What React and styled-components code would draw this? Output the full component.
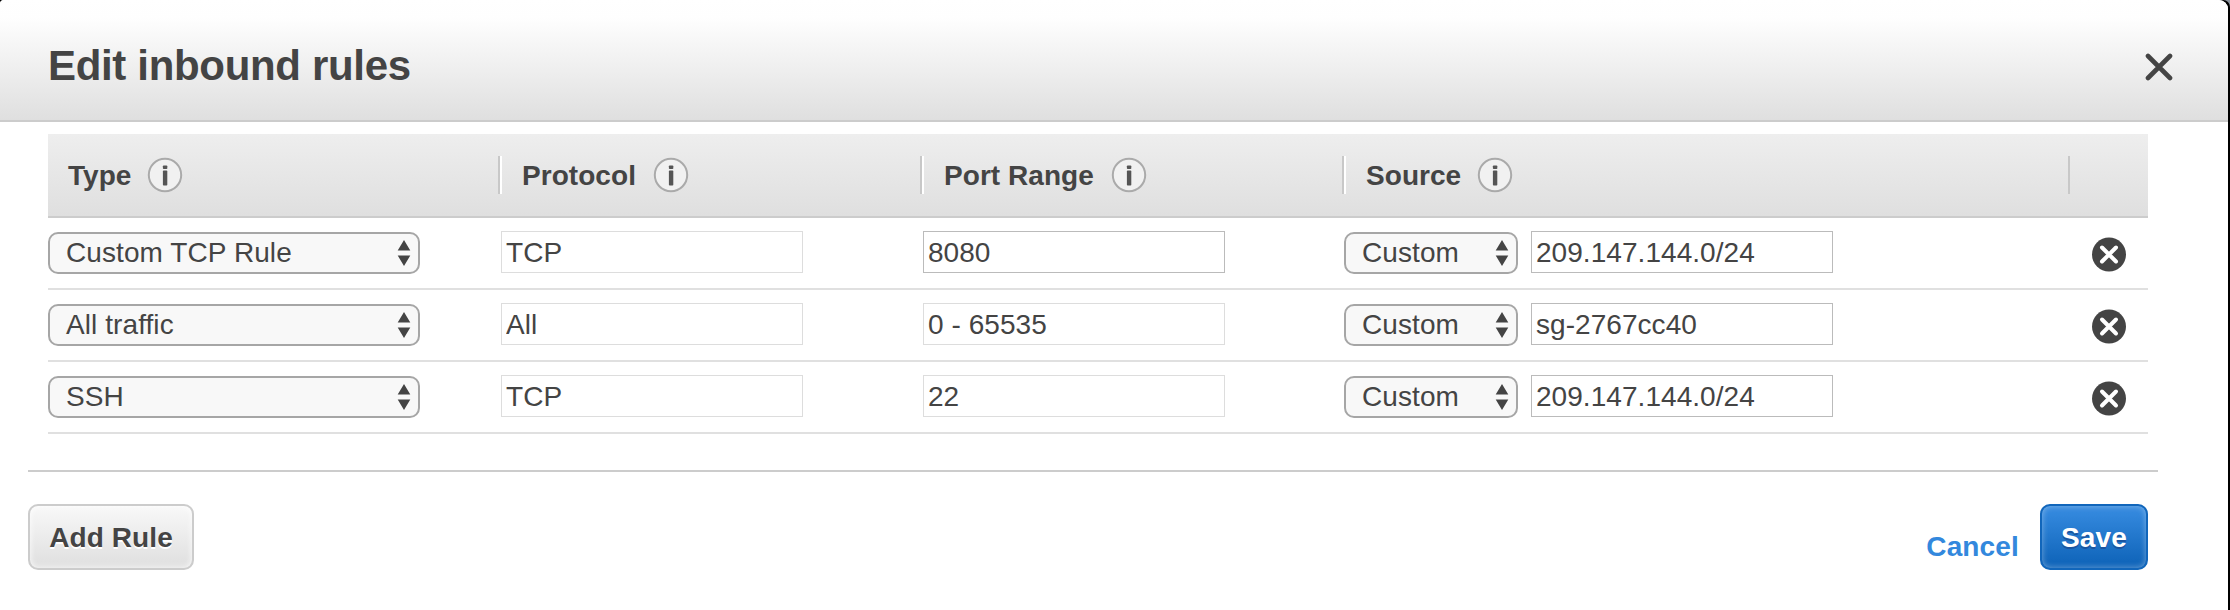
import React from 'react';
import styled, { createGlobalStyle } from 'styled-components';

const GlobalStyle = createGlobalStyle`
  *, *::before, *::after { box-sizing: border-box; }
  body {
    margin: 0;
    font-family: "Liberation Sans", Arial, Helvetica, sans-serif;
    font-size: 28px;
    color: #444;
  }
`;

const Backdrop = styled.div`
  width: 2230px;
  height: 610px;
  overflow: hidden;
  background: #8b929d;
`;

const Frame = styled.div`
  height: 610px;
  padding-right: 2px;
  border-radius: 0 7px 0 0;
  background: #000;
`;

const Dialog = styled.section`
  height: 610px;
  background: #fff;
  border-radius: 4px 9px 0 0;
  overflow: hidden;
`;

const DialogHeader = styled.header`
  display: flex;
  align-items: center;
  justify-content: space-between;
  height: 122px;
  padding: 14px 55px 0 48px;
  border-bottom: 2px solid #ccc;
  background: linear-gradient(#fff 0%, #fefefe 15%, #dfdfdf 100%);
`;

const Title = styled.h1`
  margin: 0;
  padding-bottom: 2px;
  font-size: 42px;
  line-height: 48px;
  font-weight: bold;
  letter-spacing: -0.33px;
  white-space: nowrap;
`;

const IconButton = styled.button`
  display: flex;
  padding: 0;
  border: 0;
  background: none;
  cursor: pointer;
`;

const Table = styled.div`
  margin: 12px 80px 0 48px;
`;

const Columns = styled.div`
  display: grid;
  grid-template-columns: 452px 422px 422px 726px 78px;
`;

const HeadRow = styled(Columns)`
  height: 84px;
  align-items: center;
  border-bottom: 2px solid #ccc;
  background: linear-gradient(#eee, #dfdfdf);
`;

const HeadCell = styled.div`
  display: flex;
  align-items: center;
  gap: 16px;
  height: 38px;
  padding-left: 20px;
  border-left: ${(p) => (p.$first ? 0 : 2)}px solid #fff;
  border-right: 2px solid #c8c8c8;
`;

const HeadLabel = styled.span`
  width: ${(p) => p.$width}px;
  padding-top: 2px;
  font-weight: bold;
  letter-spacing: 0.05px;
  white-space: nowrap;
`;

const EndCell = styled.div`
  height: 38px;
`;

const Row = styled(Columns)`
  height: 72px;
  border-bottom: 2px solid #e0e0e0;
`;

const Cell = styled.div`
  display: flex;
  align-items: flex-start;
  padding: 13px 0 0 ${(p) => p.$inset || 0}px;
`;

const SelectBox = styled.button`
  display: flex;
  align-items: center;
  justify-content: space-between;
  width: ${(p) => p.$width}px;
  height: 42px;
  margin: 1px ${(p) => p.$gap || 0}px 0 0;
  padding: 0 7px 0 16px;
  border: 2px solid #a6a6a6;
  border-radius: 10px;
  background: #f8f8f8;
  color: inherit;
  font: inherit;
  line-height: 36px;
  letter-spacing: 0.08px;
  white-space: nowrap;
`;

const TextField = styled.input`
  width: 302px;
  height: 42px;
  padding: 1px 4px 0;
  border: 1px solid ${(p) => (p.disabled ? '#ddd' : '#bbb')};
  border-radius: 0;
  outline: 0;
  background: #fff;
  color: #444;
  font: inherit;
  letter-spacing: 0.05px;
`;

const DeleteCell = styled.div`
  padding: 19px 0 0 22px;
`;

const Footer = styled.footer`
  display: flex;
  justify-content: space-between;
  margin: 36px 70px 0 28px;
  padding: 32px 10px 0 0;
  border-top: 2px solid #ccc;
`;

const Actions = styled.div`
  display: flex;
  align-items: flex-start;
`;

const Button = styled.button`
  width: ${(p) => p.$width}px;
  height: 66px;
  padding: 2px 0 0;
  border: 2px solid ${(p) => (p.$primary ? '#1166bb' : '#ccc')};
  border-radius: 10px;
  background: ${(p) =>
    p.$primary
      ? 'linear-gradient(#3388dd 10%, #1166bb 90%)'
      : 'linear-gradient(#f8f8f8, #dfdfdf)'};
  box-shadow: inset 0 0 6px ${(p) => (p.$primary ? 'rgba(255,255,255,.4)' : 'rgba(255,255,255,.9)')};
  color: ${(p) => (p.$primary ? '#fff' : '#444')};
  text-shadow: ${(p) => (p.$primary ? '0 2px 0 #1a55a0' : '0 2px 0 #fff')};
  font: bold 28px/32px "Liberation Sans", Arial, sans-serif;
  letter-spacing: 0.1px;
  white-space: nowrap;
`;

const CancelLink = styled.a`
  margin: 27px 21px 0 0;
  color: #3388dd;
  font-weight: bold;
  line-height: 32px;
  letter-spacing: 0.15px;
`;

const InfoIcon = () => (
  <svg width="36" height="36" viewBox="0 0 36 36">
    <circle cx="18" cy="18" r="16.2" fill="#f1f1f1" stroke="#aaa" strokeWidth="2" />
    <rect x="15.9" y="8.4" width="4.4" height="3.6" rx="0.8" fill="#555" />
    <rect x="15.9" y="13.6" width="4.4" height="15" rx="0.8" fill="#555" />
  </svg>
);

const CloseIcon = () => (
  <svg width="28" height="28" viewBox="0 0 28 28">
    <path d="M3 3L25 25M25 3L3 25" stroke="#444" strokeWidth="4.6" strokeLinecap="round" />
  </svg>
);

const DeleteIcon = () => (
  <svg width="34" height="35" viewBox="0 0 34 35">
    <circle cx="17" cy="17.5" r="17" fill="#444" />
    <path d="M10 10.5L24 24.5M24 10.5L10 24.5" stroke="#fff" strokeWidth="4" strokeLinecap="round" />
  </svg>
);

const Arrows = () => (
  <svg width="14" height="26" viewBox="0 0 14 26">
    <path d="M7 0L13.3 10.5H0.7ZM7 26L13.3 15.5H0.7Z" fill="#444" />
  </svg>
);

const Select = ({ width, gap, children }) => (
  <SelectBox type="button" $width={width} $gap={gap}>
    <span>{children}</span>
    <Arrows />
  </SelectBox>
);

const headings = [
  { name: 'Type', width: 63 },
  { name: 'Protocol', width: 115 },
  { name: 'Port Range', width: 151 },
  { name: 'Source', width: 95 },
];

const rules = [
  { type: 'Custom TCP Rule', protocol: 'TCP', port: '8080', editable: true, source: '209.147.144.0/24' },
  { type: 'All traffic', protocol: 'All', port: '0 - 65535', editable: false, source: 'sg-2767cc40' },
  { type: 'SSH', protocol: 'TCP', port: '22', editable: false, source: '209.147.144.0/24' },
];

export default function App() {
  return (
    <Backdrop>
      <GlobalStyle />
      <Frame>
        <Dialog>
          <DialogHeader>
            <Title>Edit inbound rules</Title>
            <IconButton aria-label="Close"><CloseIcon /></IconButton>
          </DialogHeader>
          <Table>
            <HeadRow>
              {headings.map(({ name, width }, i) => (
                <HeadCell key={name} $first={i === 0}>
                  <HeadLabel $width={width}>{name}</HeadLabel>
                  <InfoIcon />
                </HeadCell>
              ))}
              <EndCell />
            </HeadRow>
            {rules.map((rule) => (
              <Row key={rule.type}>
                <Cell><Select width={372}>{rule.type}</Select></Cell>
                <Cell $inset={1}><TextField defaultValue={rule.protocol} disabled /></Cell>
                <Cell $inset={1}><TextField defaultValue={rule.port} disabled={!rule.editable} /></Cell>
                <Cell>
                  <Select width={174} gap={13}>Custom</Select>
                  <TextField defaultValue={rule.source} />
                </Cell>
                <DeleteCell><IconButton aria-label="Delete"><DeleteIcon /></IconButton></DeleteCell>
              </Row>
            ))}
          </Table>
          <Footer>
            <Button $width={166}>Add Rule</Button>
            <Actions>
              <CancelLink>Cancel</CancelLink>
              <Button $primary $width={108}>Save</Button>
            </Actions>
          </Footer>
        </Dialog>
      </Frame>
    </Backdrop>
  );
}
